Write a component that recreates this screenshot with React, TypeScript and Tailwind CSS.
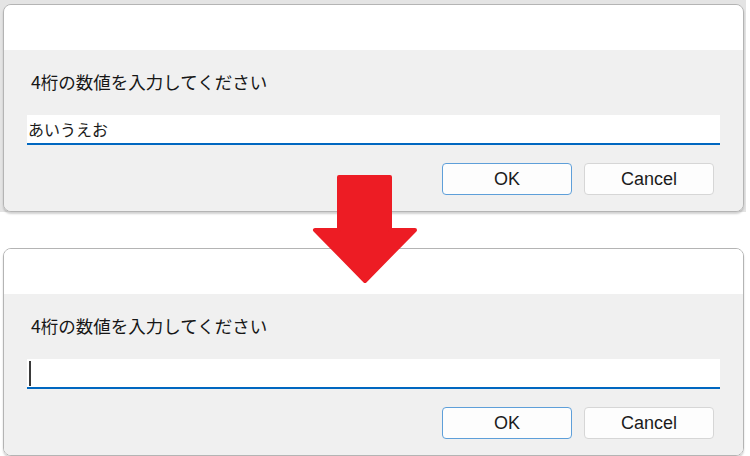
const jp = { fontFamily: '"Noto Sans CJK JP", "Noto Sans", sans-serif' }
const ui = { fontFamily: '"Liberation Sans", Arial, sans-serif' }

function Dialog({ value, showCursor }: { value: string; showCursor?: boolean }) {
  return (
    <div className="w-[741px] rounded-[8px] border border-[#b4b4b4] overflow-hidden shadow-[0_2px_2px_rgba(0,0,0,0.18)]">
      {/* title bar */}
      <div className="h-[45px] bg-white" />

      {/* body */}
      <div className="bg-[#f0f0f0] pt-[20px] pb-[16px]">
        <div className="pl-[27px] h-[24px] leading-[24px] text-[17.5px] text-[#161616]" style={jp}>
          4桁の数値を入力してください
        </div>

        <div className="mt-[21px] ml-[23px] w-[693px] h-[30px] bg-white border-b-2 border-[#0067c0] flex items-center pl-[1px]">
          {showCursor ? (
            <div className="w-[2px] h-[25px] bg-[#3a3a3a] ml-[1px]" />
          ) : (
            <span className="text-[16px] leading-[28px] text-[#1a1a1a]" style={jp}>
              {value}
            </span>
          )}
        </div>

        <div className="mt-[18px] pr-[29px] flex justify-end gap-[12px]">
          <button
            className="w-[130px] h-[32px] rounded-[4px] border border-[#5e9fd9] bg-[#fdfdfd] text-[18px] text-[#1b1b1b]"
            style={ui}
          >
            OK
          </button>
          <button
            className="w-[130px] h-[32px] rounded-[4px] border border-[#d6d6d6] bg-[#fdfdfd] text-[18px] text-[#1b1b1b]"
            style={ui}
          >
            Cancel
          </button>
        </div>
      </div>
    </div>
  )
}

export default function App() {
  return (
    <div className="relative w-[750px] h-[456px] bg-white overflow-hidden">
      {/* before */}
      <div className="w-[746px] bg-[#e4e4e4] pt-[4px] pl-[3px]">
        <Dialog value="あいうえお" />
      </div>

      {/* after */}
      <div className="mt-[36px] pl-[3px]">
        <Dialog value="" showCursor />
      </div>

      {/* red arrow */}
      <svg className="absolute left-0 top-0" width="750" height="456" viewBox="0 0 750 456">
        <path
          d="M339 177 H390 V230 H415 L365 281 L315 230 H339 Z"
          fill="#ed1c24"
          stroke="#ed1c24"
          strokeWidth="4"
          strokeLinejoin="round"
        />
      </svg>
    </div>
  )
}
